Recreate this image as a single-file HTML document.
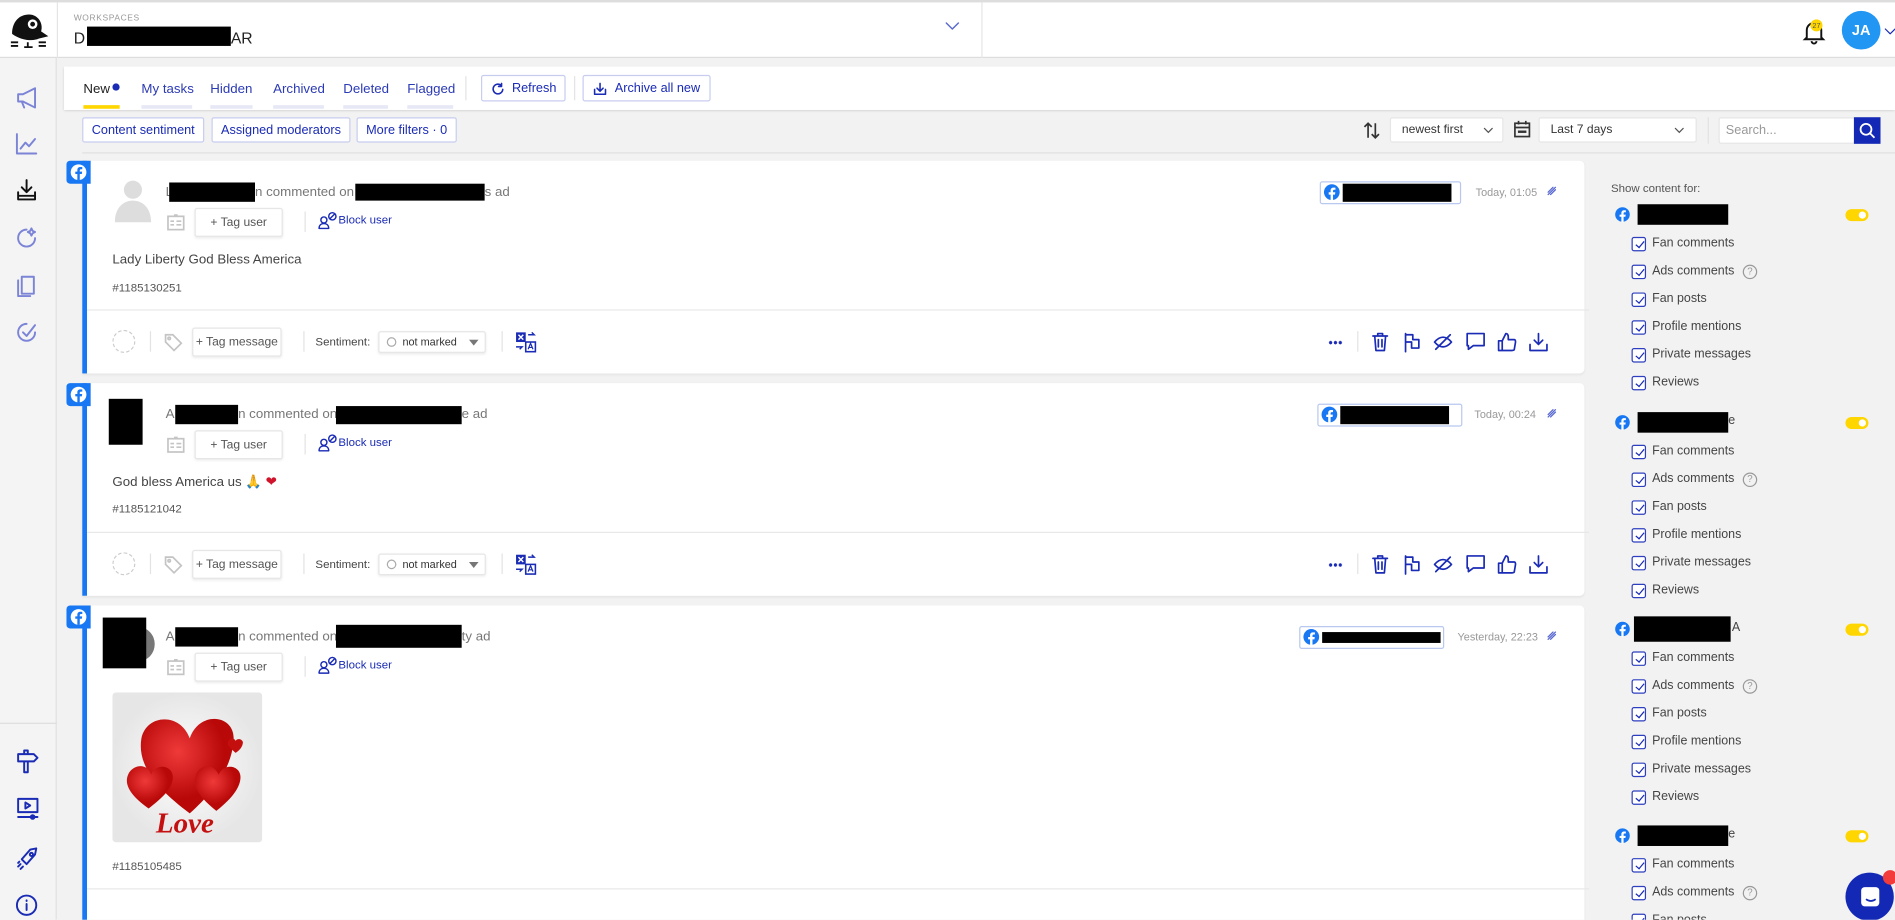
<!DOCTYPE html>
<html><head><meta charset="utf-8">
<style>
*{box-sizing:border-box;margin:0;padding:0}
html,body{width:1895px;height:920px;overflow:hidden;background:#f2f2f2}
#w{position:absolute;left:0;top:0;width:1568px;height:761px;transform:scale(1.20855);transform-origin:0 0;font-family:"Liberation Sans",sans-serif;background:#f2f2f2;overflow:hidden}
.a{position:absolute}
.blk{position:absolute;background:#000}
.ic{position:absolute;fill:none;stroke:#1a2bb5;stroke-width:1.6;stroke-linecap:round;stroke-linejoin:round}
.gi{position:absolute;fill:none;stroke:#c4c4c4;stroke-width:1.4}
.t{position:absolute;white-space:nowrap}
.box{position:absolute;background:#fff;border:1px solid #e6e6e6;border-radius:2px;box-shadow:0 1px 2px rgba(0,0,0,.08);font-size:10px;color:#555;display:flex;align-items:center;justify-content:center}
.btn{position:absolute;border:1px solid #c8cdf0;background:#fff;color:#1a2bb5;font-size:10.5px;display:flex;align-items:center;justify-content:center;border-radius:2px}
.card{position:absolute;left:68px;width:1243px;background:#fff;border-left:4px solid #1877f2;border-radius:0 4px 4px 0;box-shadow:0 1px 2px rgba(0,0,0,.06)}
.badge{position:absolute;left:-17px;top:0;width:20px;height:19px;background:#1877f2;border-radius:3px 0 0 3px}
.rp{font-size:10.3px;color:#444}
.cb{position:absolute;width:12px;height:12px;border:1px solid #2d3fbf;border-radius:2px;background:#fff}
.cb:after{content:"";position:absolute;left:3.5px;top:1px;width:3px;height:6px;border:solid #1a2bb5;border-width:0 1.6px 1.6px 0;transform:rotate(40deg)}
.tog{position:absolute;width:19px;height:10px;background:#ffd600;border-radius:5px}
.tog:after{content:"";position:absolute;right:2px;top:2px;width:6px;height:6px;border-radius:50%;background:#fff}
.vl{position:absolute;width:1px;background:#e3e3e3}
.hd{font-size:11px;color:#777}
</style></head><body><div id="w">

<div class="a" style="left:0;top:0;width:1568px;height:48px;background:#fff;border-top:2px solid #ddd;border-bottom:1px solid #ddd"></div>
<div class="a" style="left:47px;top:2px;width:1px;height:46px;background:#e5e5e5"></div>
<div class="a" style="left:812px;top:2px;width:1px;height:46px;background:#e5e5e5"></div>
<svg class="a" style="left:4px;top:10px" width="40" height="32" viewBox="0 0 40 32"><path d="M6 18 C6 8 12 2 20 2 C28 2 32 10 30 16 L36 20 L28 22 C24 24 14 24 6 18Z" fill="#111"/><circle cx="23" cy="10" r="4" fill="#fff"/><circle cx="23" cy="10" r="2" fill="#111"/><path d="M5 25h6M5 28h6M28 25h6M28 28h6M19 25v4M16 29h7" stroke="#111" stroke-width="1.5"/></svg>
<div class="t" style="left:61px;top:12px;font-size:7px;color:#999;letter-spacing:.5px">WORKSPACES</div>
<div class="t" style="left:61px;top:24px;font-size:13px;color:#222">D</div>
<div class="blk" style="left:72px;top:22px;width:119px;height:16px"></div>
<div class="t" style="left:191px;top:24px;font-size:13px;color:#222">AR</div>
<svg class="ic" style="left:781px;top:17px;stroke:#5a6ad0;stroke-width:1.2" width="14" height="10"><path d="M2 2l5 5 5-5"/></svg>
<svg class="a" style="left:1490px;top:15px" width="22" height="22" viewBox="0 0 22 22"><path d="M5 16V10a6 6 0 0 1 12 0v6l1.5 1.5h-15Z M9 19a2 2 0 0 0 4 0" fill="none" stroke="#111" stroke-width="1.6"/><circle cx="13" cy="6" r="5" fill="#ffd600"/><text x="13" y="8" font-size="6" text-anchor="middle" fill="#555" font-family="Liberation Sans">27</text></svg>
<div class="a" style="left:1524px;top:9px;width:32px;height:32px;border-radius:50%;background:#2196f3;color:#fff;font-size:12px;font-weight:bold;display:flex;align-items:center;justify-content:center">JA</div>
<svg class="ic" style="left:1559px;top:22px;stroke-width:1" width="9" height="8"><path d="M1 2l4 4 4-4"/></svg>

<div class="a" style="left:0;top:48px;width:47px;height:713px;background:#f4f4f4;border-right:1px solid #e0e0e0"></div>
<svg class="ic" style="left:12px;top:71px;stroke:#7b84d6" width="22" height="20"><path d="M3 7h4l10-5v16L7 13H3Z M6 13l2 5"/></svg>
<svg class="ic" style="left:12px;top:109px;stroke:#7b84d6" width="20" height="20"><path d="M2 2v16h16 M5 14l4-5 3 3 5-6"/></svg>
<svg class="ic" style="left:12px;top:147px;stroke:#111" width="20" height="20"><path d="M10 2v10 M6 8l4 4 4-4 M3 12v6h14v-6 M3 15h14"/></svg>
<svg class="ic" style="left:12px;top:187px;stroke:#7b84d6" width="20" height="20"><path d="M10 3a7 7 0 1 0 7 7 M14 2l1 2 2 1-2 1-1 2-1-2-2-1 2-1z"/></svg>
<svg class="ic" style="left:12px;top:226px;stroke:#7b84d6" width="20" height="20"><path d="M6 3h10v14H6Z M3 6v13h10"/></svg>
<svg class="ic" style="left:12px;top:265px;stroke:#7b84d6" width="20" height="20"><path d="M10 3a7 7 0 1 0 7 7 M7 10l3 3 7-9"/></svg>
<div class="a" style="left:0;top:598px;width:47px;height:1px;background:#ddd"></div>
<svg class="ic" style="left:12px;top:620px" width="22" height="22"><path d="M3 4h13l3 3-3 3H3Z M8 10v9h3v-9 M8 4V1h3v3"/></svg>
<svg class="ic" style="left:12px;top:658px" width="22" height="22"><path d="M3 3h16v11H3Z M9 6v5l4-2.5z M3 18h16"/><circle cx="15" cy="18" r="1.5" fill="#1a2bb5"/></svg>
<svg class="ic" style="left:12px;top:699px" width="22" height="22"><path d="M8 14l-2-2 7-8 5-1-1 5-7 8z M5 16l-2 2 M7 18l-2 2 M4 14l-1 1"/><circle cx="14" cy="8" r="1.3"/></svg>
<svg class="ic" style="left:12px;top:739px" width="22" height="22"><circle cx="10" cy="10" r="8"/><path d="M10 9v5 M10 6v.5"/></svg>

<div class="a" style="left:53px;top:55px;width:1515px;height:36px;background:#fff;box-shadow:0 1px 2px rgba(0,0,0,.15)"></div>
<div class="t" style="left:69px;top:68px;font-size:11px;color:#222">New</div>
<div class="a" style="left:93px;top:69px;width:6px;height:6px;border-radius:50%;background:#1a2bb5"></div>
<div class="a" style="left:69px;top:87px;width:30px;height:3px;background:#ffd600"></div>
<div class="t" style="left:117px;top:68px;font-size:11px;color:#2b3ab5">My tasks</div>
<div class="a" style="left:117px;top:87px;width:42px;height:3px;background:#e6e8f5"></div>
<div class="t" style="left:174px;top:68px;font-size:11px;color:#2b3ab5">Hidden</div>
<div class="a" style="left:174px;top:87px;width:35px;height:3px;background:#e6e8f5"></div>
<div class="t" style="left:226px;top:68px;font-size:11px;color:#2b3ab5">Archived</div>
<div class="a" style="left:226px;top:87px;width:42px;height:3px;background:#e6e8f5"></div>
<div class="t" style="left:284px;top:68px;font-size:11px;color:#2b3ab5">Deleted</div>
<div class="a" style="left:284px;top:87px;width:37px;height:3px;background:#e6e8f5"></div>
<div class="t" style="left:337px;top:68px;font-size:11px;color:#2b3ab5">Flagged</div>
<div class="a" style="left:337px;top:87px;width:38px;height:3px;background:#e6e8f5"></div>
<div class="vl" style="left:385px;top:63px;height:20px"></div>
<div class="btn" style="left:398px;top:62px;width:70px;height:22px"><svg class="ic" style="position:static;margin-right:7px;stroke-width:1.3" width="11" height="11"><path d="M9 3a4 4 0 1 0 1 3 M9 1v2.5H6.5"/></svg>Refresh</div>
<div class="vl" style="left:475px;top:63px;height:20px"></div>
<div class="btn" style="left:482px;top:62px;width:106px;height:22px"><svg class="ic" style="position:static;margin-right:7px;stroke-width:1.3" width="11" height="11"><path d="M5.5 1v6 M3 5l2.5 2.5L8 5 M1 6v4h9V6"/></svg>Archive all new</div>

<div class="btn" style="left:68px;top:97px;width:101px;height:21px">Content sentiment</div>
<div class="btn" style="left:175px;top:97px;width:115px;height:21px">Assigned moderators</div>
<div class="btn" style="left:295px;top:97px;width:83px;height:21px">More filters · 0</div>
<svg class="a" style="left:1128px;top:100px" width="14" height="16"><path d="M4 14V2 M1 5l3-3 3 3 M10 2v12 M7 11l3 3 3-3" fill="none" stroke="#333" stroke-width="1.4"/></svg>
<div class="box" style="left:1150px;top:97px;width:94px;height:21px;justify-content:flex-start;padding-left:9px;color:#333;box-shadow:none">newest first<svg class="a" style="right:7px;top:7px" width="9" height="6"><path d="M1 1l3.5 3.5L8 1" fill="none" stroke="#555"/></svg></div>
<svg class="a" style="left:1252px;top:99px" width="15" height="16"><rect x="1.5" y="3" width="12" height="11" fill="none" stroke="#333" stroke-width="1.4"/><path d="M1.5 6.5h12 M4.5 1v3 M10.5 1v3" stroke="#333" stroke-width="1.4"/><rect x="4" y="9" width="7" height="2" fill="#333"/></svg>
<div class="box" style="left:1273px;top:97px;width:131px;height:21px;justify-content:flex-start;padding-left:9px;color:#333;box-shadow:none">Last 7 days<svg class="a" style="right:9px;top:7px" width="9" height="6"><path d="M1 1l3.5 3.5L8 1" fill="none" stroke="#555"/></svg></div>
<div class="vl" style="left:1413px;top:97px;height:22px"></div>
<div class="box" style="left:1422px;top:97px;width:113px;height:22px;justify-content:flex-start;padding-left:5px;color:#999;font-size:10.5px;box-shadow:none">Search...</div>
<div class="a" style="left:1534px;top:97px;width:22px;height:22px;background:#1329b5"></div>
<svg class="a" style="left:1538px;top:101px" width="14" height="14"><circle cx="6" cy="6" r="4.5" fill="none" stroke="#fff" stroke-width="1.5"/><path d="M9.5 9.5l3.5 3.5" stroke="#fff" stroke-width="1.5"/></svg>
<div class="a" style="left:68px;top:126px;width:1500px;height:1px;background:#e0e0e0"></div>

<div class="t rp" style="left:1333px;top:151px;font-size:9.5px;color:#555">Show content for:</div>
<div id="rpanel"></div>

<div class="card" style="top:133px;height:176px">
 <div class="badge"><svg width="20" height="19"><circle cx="10" cy="9.5" r="6.5" fill="#fff"/><path d="M11 16v-5h1.7l.3-2H11V8c0-.6.2-1 1-1h1.1V5.3c-.3 0-1-.1-1.6-.1-1.6 0-2.5.9-2.5 2.6V9H7.3v2H9v5z" fill="#1877f2"/></svg></div>
 <svg class="a" style="left:23px;top:15px" width="34" height="36"><circle cx="15" cy="9" r="7.5" fill="#ddd"/><path d="M0 36c0-12 7-18 15-18s15 6 15 18z" fill="#ddd"/></svg>
 <div class="t hd" style="left:65px;top:20px">L</div>
 <div class="blk" style="left:68px;top:18px;width:71px;height:16px"></div>
 <div class="t hd" style="left:139px;top:20px">n commented on</div>
 <div class="blk" style="left:222px;top:19px;width:107px;height:14px"></div>
 <div class="t hd" style="left:329px;top:20px">s ad</div>
 <svg class="gi" style="left:66px;top:44px" width="16" height="14"><rect x="1" y="2" width="13" height="11"/><path d="M3 6h3M3 9h3M8 6h4M8 9h4M6 1h3"/></svg>
 <div class="box" style="left:89px;top:39px;width:73px;height:24px">+ Tag user</div>
 <div class="vl" style="left:180px;top:42px;height:17px"></div>
 <svg class="ic" style="left:191px;top:42px;stroke-width:1.2" width="16" height="15"><circle cx="5" cy="7" r="2.5"/><path d="M1 14c0-3 2-4 4-4s4 1 4 4z"/><circle cx="12" cy="4" r="3"/><path d="M10 6l4-4"/></svg>
 <div class="t" style="left:208px;top:44px;font-size:9.5px;color:#1a2bb5">Block user</div>
 <div class="t" style="left:21px;top:76px;font-size:11px;color:#444">Lady Liberty God Bless America</div>
 <div class="t" style="left:21px;top:100px;font-size:9.5px;color:#555">#1185130251</div>
</div>

<div class="card" style="top:317px;height:176px">
 <div class="badge"><svg width="20" height="19"><circle cx="10" cy="9.5" r="6.5" fill="#fff"/><path d="M11 16v-5h1.7l.3-2H11V8c0-.6.2-1 1-1h1.1V5.3c-.3 0-1-.1-1.6-.1-1.6 0-2.5.9-2.5 2.6V9H7.3v2H9v5z" fill="#1877f2"/></svg></div>
 <div class="blk" style="left:18px;top:13px;width:28px;height:38px"></div>
 <div class="t hd" style="left:65px;top:20px">A</div>
 <div class="blk" style="left:73px;top:18px;width:52px;height:16px"></div>
 <div class="t hd" style="left:125px;top:20px">n commented on</div>
 <div class="blk" style="left:206px;top:19px;width:104px;height:15px"></div>
 <div class="t hd" style="left:310px;top:20px">e ad</div>
 <svg class="gi" style="left:66px;top:44px" width="16" height="14"><rect x="1" y="2" width="13" height="11"/><path d="M3 6h3M3 9h3M8 6h4M8 9h4M6 1h3"/></svg>
 <div class="box" style="left:89px;top:39px;width:73px;height:24px">+ Tag user</div>
 <div class="vl" style="left:180px;top:42px;height:17px"></div>
 <svg class="ic" style="left:191px;top:42px;stroke-width:1.2" width="16" height="15"><circle cx="5" cy="7" r="2.5"/><path d="M1 14c0-3 2-4 4-4s4 1 4 4z"/><circle cx="12" cy="4" r="3"/><path d="M10 6l4-4"/></svg>
 <div class="t" style="left:208px;top:44px;font-size:9.5px;color:#1a2bb5">Block user</div>
 <div class="t" style="left:21px;top:75px;font-size:11px;color:#444">God bless America us 🙏 <span style="color:#d0142c">❤</span></div>
 <div class="t" style="left:21px;top:99px;font-size:9.5px;color:#555">#1185121042</div>
</div>

<div class="card" style="top:501px;height:270px">
 <div class="badge"><svg width="20" height="19"><circle cx="10" cy="9.5" r="6.5" fill="#fff"/><path d="M11 16v-5h1.7l.3-2H11V8c0-.6.2-1 1-1h1.1V5.3c-.3 0-1-.1-1.6-.1-1.6 0-2.5.9-2.5 2.6V9H7.3v2H9v5z" fill="#1877f2"/></svg></div>
 <div class="a" style="left:30px;top:18px;width:26px;height:28px;border-radius:50%;background:#777"></div>
 <div class="blk" style="left:13px;top:10px;width:36px;height:42px"></div>
 <div class="t hd" style="left:65px;top:20px">A</div>
 <div class="blk" style="left:73px;top:18px;width:52px;height:16px"></div>
 <div class="t hd" style="left:125px;top:20px">n commented on</div>
 <div class="blk" style="left:206px;top:16px;width:104px;height:19px"></div>
 <div class="t hd" style="left:310px;top:20px">ty ad</div>
 <svg class="gi" style="left:66px;top:44px" width="16" height="14"><rect x="1" y="2" width="13" height="11"/><path d="M3 6h3M3 9h3M8 6h4M8 9h4M6 1h3"/></svg>
 <div class="box" style="left:89px;top:39px;width:73px;height:24px">+ Tag user</div>
 <div class="vl" style="left:180px;top:42px;height:17px"></div>
 <svg class="ic" style="left:191px;top:42px;stroke-width:1.2" width="16" height="15"><circle cx="5" cy="7" r="2.5"/><path d="M1 14c0-3 2-4 4-4s4 1 4 4z"/><circle cx="12" cy="4" r="3"/><path d="M10 6l4-4"/></svg>
 <div class="t" style="left:208px;top:44px;font-size:9.5px;color:#1a2bb5">Block user</div>
 <svg class="a" style="left:21px;top:72px;border-radius:3px" width="124" height="124" viewBox="0 0 124 124"><defs><radialGradient id="bg"><stop offset="0" stop-color="#fff"/><stop offset="1" stop-color="#e6e6e6"/></radialGradient><radialGradient id="hr" cx=".4" cy=".35"><stop offset="0" stop-color="#f03a3a"/><stop offset="1" stop-color="#b80808"/></radialGradient></defs><rect width="124" height="124" fill="url(#bg)"/><path d="M64 100 C40 82 20 62 24 38 C28 18 56 16 64 38 C72 14 104 18 100 42 C98 64 82 84 64 100Z" fill="url(#hr)"/><path d="M30 96 C16 86 8 76 14 66 C20 58 30 60 32 68 C36 58 50 60 50 70 C50 80 40 88 30 96Z" fill="url(#hr)"/><path d="M86 98 C74 88 64 78 70 66 C76 58 84 60 88 68 C92 58 106 60 106 70 C106 80 96 90 86 98Z" fill="url(#hr)"/><path d="M102 50 C98 46 94 44 96 40 C98 37 101 38 102 40 C103 38 107 38 108 41 C108 45 105 48 102 50Z" fill="#c40f0f"/><text x="36" y="116" font-family="Liberation Serif" font-style="italic" font-weight="bold" font-size="24" fill="#c41010">Love</text></svg>
 <div class="t" style="left:21px;top:211px;font-size:9.5px;color:#555">#1185105485</div>
 <div class="a" style="left:0;top:234px;width:1243px;height:1px;background:#e8e8e8"></div>
</div>

<div class="a" style="left:1527px;top:722px;width:40px;height:40px;border-radius:50%;background:#1329b5"></div>
<svg class="a" style="left:1538px;top:732px" width="20" height="20"><rect x="2" y="2" width="15" height="16" rx="3" fill="#fff"/><path d="M6 12q4 3 8 0" stroke="#1329b5" stroke-width="1.4" fill="none"/></svg>
<div class="a" style="left:1558px;top:720px;width:12px;height:12px;border-radius:50%;background:#f23b3b"></div>

<script>
var fb='<svg width="14" height="14" viewBox="0 0 14 14"><circle cx="7" cy="7" r="6.5" fill="#1877f2"/><path d="M8 14V9h1.6l.3-1.9H8V6c0-.6.2-1 1-1h1V3.3C9.7 3.2 9.1 3.2 8.5 3.2 7 3.2 6 4 6 5.7v1.4H4.4V9H6v5z" fill="#fff"/></svg>';
var cards=document.querySelectorAll('.card');
var tops=[[1020,'Today, 01:05',1149],[1018,'Today, 00:24',1148],[1003,'Yesterday, 22:23',1134]];
var pbw=[[117,90],[120,90],[120,98]];
cards.forEach(function(c,i){
 var h='';
 var L=tops[i][0];
 h+='<div class="a" style="left:'+L+'px;top:17px;width:'+pbw[i][0]+'px;height:19px;border:1px solid #b8c8ef;border-radius:2px;background:#fff"></div>';
 h+='<div class="a" style="left:'+(L+3)+'px;top:19px">'+fb+'</div>';
 h+='<div class="blk" style="left:'+(L+19)+'px;top:'+(i==2?22:19)+'px;width:'+pbw[i][1]+'px;height:'+(i==2?9:15)+'px"></div>';
 h+='<div class="t" style="left:'+tops[i][2]+'px;top:21px;font-size:9px;color:#999">'+tops[i][1]+'</div>';
 h+='<svg class="ic" style="left:1207px;top:20px;stroke-width:1.1;stroke:#5a6ad0" width="10" height="10"><path d="M2 6l4-4M4 8l4-4M2 8l6-6"/></svg>';
 if(i<2){
  h+='<div class="a" style="left:0;top:123px;width:1243px;height:1px;background:#e8e8e8"></div>';
  var y=150;
  h+='<div class="a" style="left:21px;top:'+(y-10)+'px;width:19px;height:19px;border:1.5px dashed #ccc;border-radius:50%"></div>';
  h+='<div class="vl" style="left:52px;top:'+(y-9)+'px;height:17px"></div>';
  h+='<svg class="gi" style="left:62px;top:'+(y-9)+'px" width="18" height="18"><path d="M3 3h6l7 7-6 6-7-7z"/><circle cx="6" cy="6" r="1"/></svg>';
  h+='<div class="box" style="left:87px;top:'+(y-12)+'px;width:74px;height:24px">+ Tag message</div>';
  h+='<div class="vl" style="left:179px;top:'+(y-9)+'px;height:17px"></div>';
  h+='<div class="t" style="left:189px;top:'+(y-5)+'px;font-size:9.5px;color:#444">Sentiment:</div>';
  h+='<div class="box" style="left:241px;top:'+(y-9)+'px;width:89px;height:18px;justify-content:flex-start;padding-left:6px;font-size:9px;color:#333"><span style="display:inline-block;width:8px;height:8px;border:1px solid #aaa;border-radius:50%;margin-right:5px"></span>not marked<svg class="a" style="right:5px;top:6px" width="8" height="5"><path d="M0 0h8L4 5z" fill="#777"/></svg></div>';
  h+='<div class="vl" style="left:343px;top:'+(y-9)+'px;height:17px"></div>';
  h+='<svg class="a" style="left:354px;top:'+(y-9)+'px" width="18" height="18"><rect x="1" y="1" width="8" height="8" fill="#1a2bb5"/><path d="M3 3l4 4M7 3l-4 4" stroke="#fff" stroke-width="1.2"/><rect x="9" y="9" width="8" height="8" fill="#fff" stroke="#1a2bb5" stroke-width="1.3"/><path d="M11 15l2-5 2 5M11.7 13.5h2.6" stroke="#1a2bb5" stroke-width="1" fill="none"/><path d="M11 3h5l-2-2M1 13h5l-2 2" stroke="#1a2bb5" stroke-width="1.2" fill="none"/></svg>';
  h+='<div class="a" style="left:1027px;top:'+(y-1)+'px;width:12px;height:3px;background:radial-gradient(circle,#1a2bb5 1.3px,transparent 1.5px) 0 0/4px 3px"></div>';
  h+='<div class="vl" style="left:1051px;top:'+(y-9)+'px;height:17px"></div>';
  var ic=['M3 4h12M7 4V2h4v2M4.5 4l1 12h7l1-12M7.5 7v6M10.5 7v6','M4 17V2M4 3h6v4h5v7H9V9H4','M2 9q7-8 14 0q-7 8-14 0M3 15L15 3','M2 2h14v10H7l-4 3v-3H2z','M2 8h3v8H2zM5 8l3-6q2 0 2 3v2h5q1 0 1 2l-1 6q0 1-2 1H5','M9 2v9M5.5 7.5L9 11l3.5-3.5M2 11v5h14v-5'];
  var xs=[1061,1087,1113,1140,1166,1192];
  for(var k=0;k<6;k++) h+='<svg class="ic" style="left:'+xs[k]+'px;top:'+(y-9)+'px;stroke-width:1.4" width="18" height="18"><path d="'+ic[k]+'"/></svg>';
 }
 c.insertAdjacentHTML('beforeend',h);
});
var rp='';
var groups=[[178,75,''],[350,75,'e'],[521,80,'A'],[692,75,'e']];
var items=['Fan comments','Ads comments','Fan posts','Profile mentions','Private messages','Reviews'];
groups.forEach(function(g){
 var y=g[0];
 rp+='<div class="a" style="left:1336px;top:'+(y-7)+'px">'+fb.replace('width="14" height="14"','width="13" height="13"')+'</div>';
 rp+='<div class="blk" style="left:'+(g[2]=='A'?1352:1355)+'px;top:'+(g[2]=='A'?y-11:y-9)+'px;width:'+g[1]+'px;height:'+(g[2]=='A'?21:17)+'px"></div>';
 if(g[2]) rp+='<div class="t rp" style="left:'+(g[2]=='A'?1433:1430)+'px;top:'+(y-7)+'px">'+g[2]+'</div>';
 rp+='<div class="tog" style="left:1527px;top:'+(y-5)+'px"></div>';
 for(var k=0;k<6;k++){var yy=y+24+k*23; if(yy>775)break;
  rp+='<div class="cb" style="left:1350px;top:'+(yy-6)+'px"></div><div class="t rp" style="left:1367px;top:'+(yy-6)+'px">'+items[k]+'</div>';
  if(k==1) rp+='<div class="a" style="left:1442px;top:'+(yy-6)+'px;width:12px;height:12px;border:1px solid #999;border-radius:50%;font-size:8px;color:#999;text-align:center;line-height:10px">?</div>';
 }
});
document.getElementById('rpanel').outerHTML=rp;
</script>
</div></body></html>
